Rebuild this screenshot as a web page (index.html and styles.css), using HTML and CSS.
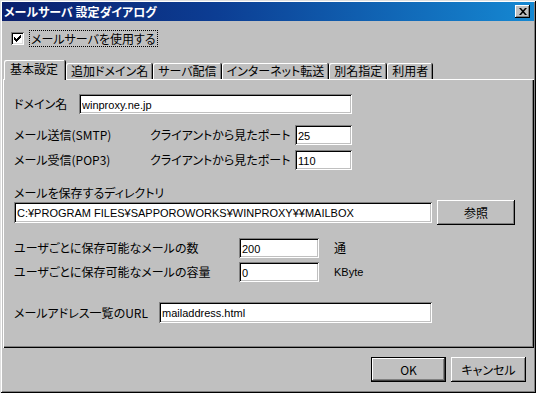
FILE: index.html
```html
<!DOCTYPE html>
<html lang="ja">
<head>
<meta charset="utf-8">
<title>メールサーバ 設定ダイアログ</title>
<link rel="stylesheet" href="styles.css">
</head>
<body>
<div class="window">
  <div class="titlebar">
    <span class="title">メールサーバ 設定ダイアログ</span>
    <span class="close"><svg width="8" height="7" viewBox="0 0 8 7"><path d="M0 0h2l2 2.2L6 0h2L5 3.5 8 7H6L4 4.8 2 7H0l3-3.5z" fill="#000"/></svg></span>
  </div>
  <div class="client">
    <div class="enable">
      <span class="checkbox"><svg width="9" height="9" viewBox="0 0 9 9"><path d="M1 3h1v1h1v1h1V4h1V3h1V2h1V1h1v3H7v1H6v1H5v1H4v1H3V7H2V6H1z" fill="#000"/></svg></span>
      <span class="focus">メールサーバを使用する</span>
    </div>
    <div class="tabs">
      <div class="tab active">基本設定</div>
      <div class="tab">追加ドメイン名</div>
      <div class="tab">サーバ配信</div>
      <div class="tab">インターネット転送</div>
      <div class="tab">別名指定</div>
      <div class="tab">利用者</div>
    </div>
    <div class="panel">
      <div class="row row-domain">
        <span class="lbl lbl-domain">ドメイン名</span>
        <input class="field f-domain" type="text" value="winproxy.ne.jp">
      </div>
      <div class="row row-smtp">
        <span class="lbl lbl-proto">メール送信(SMTP)</span>
        <span class="lbl lbl-port">クライアントから見たポート</span>
        <input class="field f-port" type="text" value="25">
      </div>
      <div class="row row-pop">
        <span class="lbl lbl-proto">メール受信(POP3)</span>
        <span class="lbl lbl-port">クライアントから見たポート</span>
        <input class="field f-port" type="text" value="110">
      </div>
      <div class="caption">メールを保存するディレクトリ</div>
      <div class="row row-dir">
        <input class="field f-dir" type="text" value="C:¥PROGRAM FILES¥SAPPOROWORKS¥WINPROXY¥¥MAILBOX">
        <button class="btn btn-browse" type="button">参照</button>
      </div>
      <div class="row row-count">
        <span class="lbl lbl-quota">ユーザごとに保存可能なメールの数</span>
        <input class="field f-num" type="text" value="200">
        <span class="unit">通</span>
      </div>
      <div class="row row-size">
        <span class="lbl lbl-quota">ユーザごとに保存可能なメールの容量</span>
        <input class="field f-num" type="text" value="0">
        <span class="unit unit-latin">KByte</span>
      </div>
      <div class="row row-url">
        <span class="lbl lbl-url">メールアドレス一覧のURL</span>
        <input class="field f-url" type="text" value="mailaddress.html">
      </div>
    </div>
    <div class="buttons">
      <button class="btn btn-default" type="button">OK</button>
      <button class="btn" type="button">キャンセル</button>
    </div>
  </div>
</div>
</body>
</html>
```
FILE: styles.css
```css
* { box-sizing: border-box; }
html, body { margin: 0; padding: 0; }
body {
  width: 536px;
  height: 393px;
  overflow: hidden;
  background: #c0c0c0;
  font-family: "Noto Sans CJK JP", "Noto Sans", sans-serif;
  font-size: 12px;
  line-height: 14px;
  color: #000;
  font-feature-settings: "palt";
}
.window {
  width: 536px;
  height: 393px;
  display: flex;
  flex-direction: column;
  padding: 2px;
  background: #c0c0c0;
  box-shadow: inset 1px 1px #dfdfdf, inset -1px -1px #000, inset 2px 2px #fff, inset -2px -2px #808080;
}
.titlebar {
  height: 19px;
  flex: none;
  display: flex;
  align-items: center;
  justify-content: space-between;
  padding: 0 4px 0 2px;
  background: linear-gradient(90deg, #0a1f6c 0%, #0c3d93 40%, #1588d2 100%);
}
.title {
  color: #fff;
  font-weight: bold;
  font-size: 12px;
}
.close {
  width: 15px;
  height: 13px;
  display: flex;
  align-items: center;
  justify-content: center;
  background: #c0c0c0;
  box-shadow: inset -1px -1px #000, inset 1px 1px #fff, inset -2px -2px #808080;
}
.client {
  flex: 1;
  display: flex;
  flex-direction: column;
}
.enable {
  display: flex;
  align-items: center;
  height: 17px;
  margin: 9px 0 0 9px;
}
.checkbox {
  width: 13px;
  height: 13px;
  display: flex;
  align-items: center;
  justify-content: center;
  background: #fff;
  box-shadow: inset 1px 1px #808080, inset -1px -1px #fff, inset 2px 2px #000, inset -2px -2px #dfdfdf;
}
.focus {
  margin-left: 5px;
  height: 17px;
  padding: 0 1px;
  border: 1px dotted #000;
  line-height: 15px;
}
.tabs {
  display: flex;
  align-items: flex-end;
  height: 19px;
  margin-top: 13px;
  padding-left: 2px;
  flex: none;
}
.tab {
  height: 16px;
  padding: 1px 4px 0 5px;
  line-height: 14px;
  border-right: 1px solid #000;
  border-radius: 2px 2px 0 0;
  box-shadow: inset 1px 1px #fff, inset -1px 0 #808080;
  white-space: nowrap;
}
.tab.active {
  height: 20px;
  margin-bottom: -1px;
  padding: 2px 7px 0 6px;
  background: #c0c0c0;
  z-index: 1;
}
.panel {
  height: 269px;
  flex: none;
  margin-left: 1px;
  padding: 15px 0 0 11px;
  display: flex;
  flex-direction: column;
  box-shadow: inset 1px 1px #fff, inset -1px -1px #000, inset -2px -2px #808080;
}
.row {
  display: flex;
  align-items: center;
  flex: none;
}
.lbl { white-space: nowrap; flex: none; }
.lbl-domain { width: 65px; }
.lbl-proto { width: 136px; }
.lbl-port { width: 145px; }
.lbl-quota { width: 225px; }
.lbl-url { width: 145px; }
.field {
  flex: none;
  height: 20px;
  margin: 0;
  padding: 1px 0 0 3px;
  border: none;
  outline: none;
  background: #fff;
  font-family: "Liberation Sans", "Noto Sans CJK JP", sans-serif;
  font-size: 11px;
  font-feature-settings: normal;
  color: #000;
  box-shadow: inset 1px 1px #808080, inset -1px -1px #fff, inset 2px 2px #000, inset -2px -2px #c0c0c0;
}
.f-domain { width: 273px; }
.f-port { width: 57px; }
.f-dir { width: 418px; height: 21px; }
.f-num { width: 80px; }
.f-url { width: 273px; height: 21px; }
.row-smtp { margin-top: 11px; }
.row-pop { margin-top: 5px; }
.caption { margin-top: 16px; height: 14px; }
.row-dir { margin-top: 0; height: 25px; gap: 5px; }
.row-count { margin-top: 13px; }
.row-size { margin-top: 4px; }
.row-url { margin-top: 20px; }
.unit { margin-left: 15px; }
.unit-latin { font-family: "Liberation Sans", sans-serif; font-size: 11px; }
.btn {
  flex: none;
  height: 25px;
  width: 75px;
  margin: 0;
  padding: 0;
  border: none;
  background: #c0c0c0;
  font: inherit;
  font-feature-settings: "palt";
  color: #000;
  box-shadow: inset -1px -1px #000, inset 1px 1px #fff, inset -2px -2px #808080;
}
.btn-browse { width: 78px; }
.btn-default {
  border: 1px solid #000;
  box-shadow: inset -1px -1px #404040, inset 1px 1px #fff, inset -2px -2px #808080;
}
.buttons {
  display: flex;
  justify-content: flex-end;
  gap: 5px;
  margin-top: 9px;
  padding-right: 8px;
}
```
